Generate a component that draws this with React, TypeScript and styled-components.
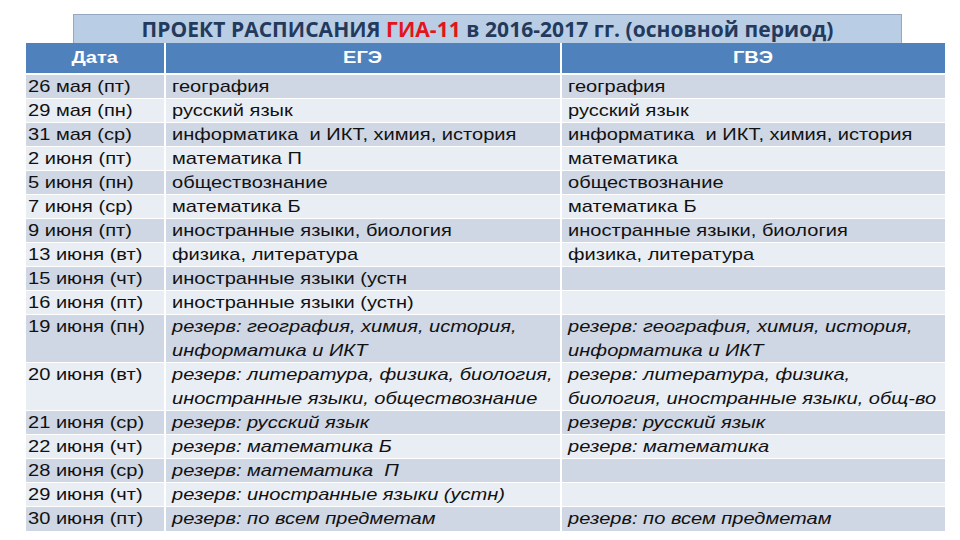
import styled, { createGlobalStyle } from "styled-components";

const Global = createGlobalStyle`
  html, body {
    margin: 0;
    padding: 0;
    background: #ffffff;
  }
`;

const Page = styled.div`
  width: 960px;
  height: 540px;
  display: flex;
  flex-direction: column;
  padding-top: 14px;
  box-sizing: border-box;
  overflow: hidden;
`;

const TitleBox = styled.div`
  margin-left: 73px;
  width: 829px;
  height: 29px;
  box-sizing: border-box;
  background: #b9cde5;
  border: 1px solid #95a8c0;
  border-bottom: none;
  display: flex;
  align-items: center;
  justify-content: center;
  font-family: "Open Sans", "Liberation Sans", sans-serif;
  font-weight: 700;
  font-size: 21px;
  color: #233a5c;
  letter-spacing: 0.05px;
  white-space: nowrap;
`;

const Red = styled.span`
  color: #e3141b;
`;

const Table = styled.div`
  margin-left: 26px;
  width: 919px;
  display: grid;
  grid-template-columns: 138px 396px 385px;
  font-family: "Liberation Sans", Arial, sans-serif;
  font-size: 17px;
  color: #111;
`;

const HeadCell = styled.div`
  background: #4f81bd;
  color: #fff;
  font-weight: 700;
  height: 32px;
  display: flex;
  align-items: center;
  justify-content: center;
  border-left: 2px solid #fff;
  border-bottom: 2px solid #fff;
  box-sizing: border-box;
  &:first-child {
    border-left: none;
  }
`;

const Cell = styled.div<{ $dark: boolean; $first?: boolean; $italic?: boolean }>`
  background: ${(p) => (p.$dark ? "#cfd6e4" : "#e9edf4")};
  font-style: ${(p) => (p.$italic ? "italic" : "normal")};
  line-height: 24px;
  padding: 0 4px 0 ${(p) => (p.$first ? "2px" : "6px")};
  border-left: ${(p) => (p.$first ? "none" : "2px solid #fff")};
  border-top: 1px solid #fff;
  margin-top: -1px;
  box-sizing: border-box;
  overflow: hidden;
`;

// the slide's text is stretched wider than a plain Arial run
const Wide = styled.span`
  display: inline-block;
  white-space: pre;
  transform: scaleX(1.18);
  transform-origin: left center;
`;

const HeadText = styled(Wide)`
  transform-origin: center center;
`;

type Row = { date: string; ege: string; gve: string; italic?: boolean };

const rows: Row[] = [
  { date: "26 мая (пт)", ege: "география", gve: "география" },
  { date: "29 мая (пн)", ege: "русский язык", gve: "русский язык" },
  { date: "31 мая (ср)", ege: "информатика  и ИКТ, химия, история", gve: "информатика  и ИКТ, химия, история" },
  { date: "2 июня (пт)", ege: "математика П", gve: "математика" },
  { date: "5 июня (пн)", ege: "обществознание", gve: "обществознание" },
  { date: "7 июня (ср)", ege: "математика Б", gve: "математика Б" },
  { date: "9 июня (пт)", ege: "иностранные языки, биология", gve: "иностранные языки, биология" },
  { date: "13 июня (вт)", ege: "физика, литература", gve: "физика, литература" },
  { date: "15 июня (чт)", ege: "иностранные языки (устн", gve: "" },
  { date: "16 июня (пт)", ege: "иностранные языки (устн)", gve: "" },
  {
    date: "19 июня (пн)",
    ege: "резерв: география, химия, история,\nинформатика и ИКТ",
    gve: "резерв: география, химия, история,\nинформатика и ИКТ",
    italic: true,
  },
  {
    date: "20 июня (вт)",
    ege: "резерв: литература, физика, биология,\nиностранные языки, обществознание",
    gve: "резерв: литература, физика,\nбиология, иностранные языки, общ-во",
    italic: true,
  },
  { date: "21 июня (ср)", ege: "резерв: русский язык", gve: "резерв: русский язык", italic: true },
  { date: "22 июня (чт)", ege: "резерв: математика Б", gve: "резерв: математика", italic: true },
  { date: "28 июня (ср)", ege: "резерв: математика  П", gve: "", italic: true },
  { date: "29 июня (чт)", ege: "резерв: иностранные языки (устн)", gve: "", italic: true },
  { date: "30 июня (пт)", ege: "резерв: по всем предметам", gve: "резерв: по всем предметам", italic: true },
];

export default function App() {
  return (
    <Page>
      <Global />
      <TitleBox>
        <span>
          ПРОЕКТ РАСПИСАНИЯ <Red>ГИА-11</Red> в 2016-2017 гг. (основной период)
        </span>
      </TitleBox>
      <Table>
        <HeadCell>
          <HeadText>Дата</HeadText>
        </HeadCell>
        <HeadCell>
          <HeadText>ЕГЭ</HeadText>
        </HeadCell>
        <HeadCell>
          <HeadText>ГВЭ</HeadText>
        </HeadCell>
        {rows.map((r, i) => {
          const dark = i % 2 === 0;
          return [
            <Cell key={`d${i}`} $dark={dark} $first>
              <Wide>{r.date}</Wide>
            </Cell>,
            <Cell key={`e${i}`} $dark={dark} $italic={r.italic}>
              <Wide>{r.ege}</Wide>
            </Cell>,
            <Cell key={`g${i}`} $dark={dark} $italic={r.italic}>
              <Wide>{r.gve}</Wide>
            </Cell>,
          ];
        })}
      </Table>
    </Page>
  );
}
